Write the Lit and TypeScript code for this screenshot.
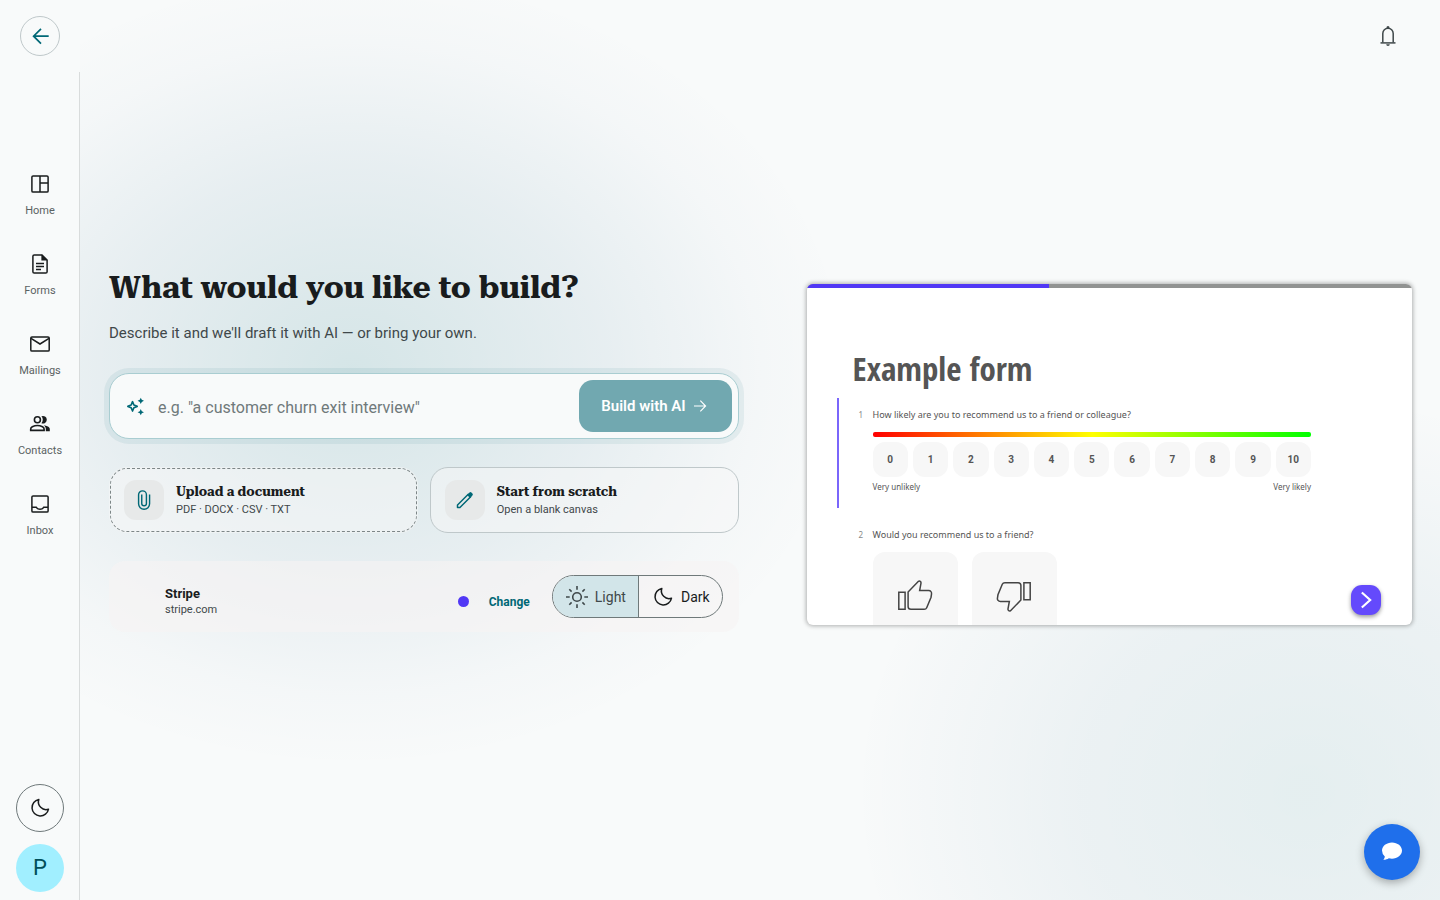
import { LitElement, html, css, svg } from "lit";
import { customElement, property, state } from "lit/decorators.js";
import { classMap } from "lit/directives/class-map.js";
import { styleMap } from "lit/directives/style-map.js";

const icons: Record<string, unknown> = {
  back: svg`<g fill="none" stroke="currentColor" stroke-width="1.7"><path d="M20.7 12.2H6M13 4.8 5.6 12.2l7.4 7.4"/></g>`,
  forward: svg`<g fill="none" stroke="currentColor" stroke-width="1.7"><path d="M3 12h17M12.5 4 20.4 12l-7.9 8"/></g>`,
  bell: svg`<g fill="none" stroke="currentColor" stroke-width="1.5"><path d="M4.5 18.9h15"/><path d="M6.8 18.5V9.4a5.2 5.2 0 0 1 10.4 0v9.1"/></g><path fill="currentColor" d="M10.4 4.3a1.6 2.2 0 0 1 3.2 0zM10.2 20.3h3.6a1.8 1.8 0 0 1-3.6 0z"/>`,
  home: svg`<g fill="none" stroke="currentColor" stroke-width="1.5"><rect x="3.9" y="3.9" width="16.2" height="16.2" rx="1.2"/><path d="M12 4v16M12 11h8"/></g>`,
  forms: svg`<g fill="none" stroke="currentColor" stroke-width="1.5"><path d="M14 2.9H6.2a1.3 1.3 0 0 0-1.3 1.3v15.6a1.3 1.3 0 0 0 1.3 1.3h11.6a1.3 1.3 0 0 0 1.3-1.3V8z"/><path d="M8 11.6h8M8 14.6h8M8 17.5h5"/></g><path fill="currentColor" d="M13.4 2.6v5.9h6z"/>`,
  mailings: svg`<g fill="none" stroke="currentColor" stroke-width="1.5"><rect x="2.8" y="4.9" width="18.4" height="14.2" rx="1.2"/><path d="m3 6.3 9 5.7 9-5.7"/></g>`,
  contacts: svg`<g fill="none" stroke="currentColor" stroke-width="1.6"><circle cx="9.4" cy="7.8" r="3"/><path d="M2.7 18.4v-1.3c0-1.1.6-1.9 1.6-2.4a11.5 11.5 0 0 1 10.2 0c1 .5 1.6 1.3 1.6 2.4v1.3z"/></g><path fill="currentColor" d="M13.4 11.2a5 5 0 0 0 0-6.9 3.8 3.8 0 1 1 0 6.9zM17.8 19.2v-2.2c0-1.5-.7-2.8-2.1-3.7 1.5.2 2.9.7 4.2 1.3 1.2.6 1.9 1.5 1.9 2.7v1.9z"/>`,
  inbox: svg`<g fill="none" stroke="currentColor" stroke-width="1.5"><rect x="3.9" y="3.9" width="16.2" height="16.2" rx="1.2"/><path d="M4 15.3h4.3c.8 1.3 2.1 2 3.7 2s2.9-.7 3.7-2H20"/></g>`,
  moon: svg`<path fill="none" stroke="currentColor" stroke-width="1.5" stroke-linejoin="round" d="M10.8 3.5A8.300 8.300 0 1 0 20.500 13.200 7.700 7.700 0 0 1 10.800 3.500z"/>`,
  sun: svg`<g fill="none" stroke="currentColor" stroke-width="1.6"><circle cx="12" cy="12" r="4.3"/><path d="M12 1v3.7M12 19.3V23M1 12h3.7M19.3 12H23M4.3 4.3l2.3 2.3M17.4 17.4l2.3 2.3M19.7 4.3l-2.3 2.3M6.6 17.4l-2.3 2.3"/></g>`,
  sparkle: svg`<path fill="none" stroke="currentColor" stroke-width="1.8" stroke-linejoin="round" d="M9.3 7.3 10.8 10.9 14.4 12.4 10.8 13.9 9.3 17.5 7.8 13.9 4.2 12.4 7.8 10.9z"/><path fill="currentColor" d="m18.3 2.9 1.1 2.4 2.4 1.1-2.4 1.1-1.1 2.4-1.1-2.4-2.4-1.1 2.4-1.1zM18.3 15.2l1.1 2.4 2.4 1.1-2.4 1.1-1.1 2.4-1.1-2.4-2.4-1.1 2.4-1.1z"/>`,
  clip: svg`<path fill="none" stroke="currentColor" stroke-width="1.7" d="M18.700 5.500v11a6.600 6.600 0 0 1-13.200 0V5.700a4.700 4.700 0 0 1 9.400 0v10.500a2.800 2.800 0 0 1-5.600 0V5.500"/>`,
  pencil: svg`<path fill="none" stroke="currentColor" stroke-width="1.8" stroke-linejoin="round" d="M3 21v-2.900L15.900 5.200l2.900 2.900L5.900 21z"/><path fill="currentColor" d="m14.500 6 2.900-2.900a1.600 1.600 0 0 1 2.300 0l1.200 1.200a1.600 1.600 0 0 1 0 2.300l-2.900 2.900z"/>`,
  chevron: svg`<path fill="none" stroke="currentColor" stroke-width="2.6" d="m7 3 10 9-10 9"/>`,
  chat: svg`<path fill="currentColor" d="M12 2.5c5.500 0 10 3.600 10 8.100s-4.500 8.100-10 8.100c-1.100 0-2.200-.1-3.200-.4-1.500 1-3.400 1.600-5.600 1.500.9-.9 1.500-2.200 1.600-3.400A7.500 7.500 0 0 1 2 10.600c0-4.500 4.500-8.100 10-8.100z"/>`,
  thumbUp: svg`<g fill="none" stroke="currentColor" stroke-width="1"><path d="M1.2 9.5h4.2v11.400H1.200zM7.400 9.300 14.300 2.200c.8-.6 1.900.2 1.700 1.200l-.9 5h6c1.300 0 2.200 1 1.900 2.400l-.3 2-2.900 7c-.3.7-.9 1.100-1.700 1.100H9.300c-1.100 0-1.900-.8-1.900-1.900z"/></g>`,
};

@customElement("ui-icon")
class UiIcon extends LitElement {
  @property() name = "home";

  static styles = css`
    :host {
      display: inline-flex;
      width: 24px;
      height: 24px;
      flex: none;
    }
    svg {
      width: 100%;
      height: 100%;
    }
  `;

  render() {
    return html`<svg viewBox="0 0 24 24" aria-hidden="true">${icons[this.name]}</svg>`;
  }
}

@customElement("form-preview")
class FormPreview extends LitElement {
  @property({ type: Number }) progress = 40;

  static styles = css`
    :host {
      display: block;
      font-family: "Noto Sans", "Open Sans", sans-serif;
      color: #555;
    }
    .card {
      position: relative;
      aspect-ratio: 16 / 9;
      overflow: hidden;
      border-radius: 6px;
      background: #fff;
      box-shadow: 0 0 4px 1px rgba(0, 0, 0, 0.3);
    }
    .track {
      height: 4px;
      background: #919392;
    }
    .bar {
      height: 4px;
      background: #5138f5;
    }
    .body {
      padding: 58px 101px 0 30px;
    }
    h2 {
      margin: 0 0 6px 16px;
      font: 700 33px/46px "Open Sans Condensed", "Open Sans", sans-serif;
      color: #555;
    }
    .question {
      display: grid;
      grid-template-columns: 14px minmax(0, 1fr);
      padding: 10px 0 10px 20px;
      border-left: 2px solid transparent;
      font-size: 9px;
      line-height: 14px;
    }
    .question.active {
      border-left-color: #7a66fb;
      height: 90px;
      margin-bottom: 10px;
    }
    .number {
      font-size: 8px;
      color: #888;
    }
    .meter {
      height: 5px;
      margin: 10px 0 5px;
      border-radius: 2px;
      background: linear-gradient(90deg, #f00, #ff0 50%, #0f0);
    }
    .scale {
      display: grid;
      grid-template-columns: repeat(11, minmax(0, 1fr));
      gap: 5px;
    }
    .score {
      height: 35px;
      padding: 0;
      border: 0;
      border-radius: 12px;
      background: #f7f7f7;
      color: #555;
      font: 700 10px/35px Roboto, sans-serif;
    }
    .ends {
      display: flex;
      justify-content: space-between;
      margin-top: 4px;
      font-size: 8px;
      line-height: 12px;
    }
    .tiles {
      display: flex;
      gap: 14px;
      margin-top: 10px;
    }
    .tile {
      display: flex;
      align-items: center;
      justify-content: center;
      width: 85px;
      height: 88px;
      padding: 0;
      border: 0;
      border-radius: 12px;
      background: #f7f7f7;
      color: #444;
    }
    .thumb {
      width: 36px;
      height: 36px;
    }
    .thumb.down {
      transform: rotate(180deg);
    }
    .next {
      position: absolute;
      right: 31px;
      bottom: 10px;
      display: flex;
      align-items: center;
      justify-content: center;
      width: 30px;
      height: 30px;
      padding: 0;
      border: 0;
      border-radius: 11px;
      background: #644afc;
      color: #fff;
      box-shadow: 0 2px 4px rgba(0, 0, 0, 0.4);
    }
    .next ui-icon {
      width: 20px;
      height: 20px;
    }
  `;

  render() {
    return html`
      <section class="card" aria-label="Example form">
        <div class="track">
          <div class="bar" style=${styleMap({ width: `${this.progress}%` })}></div>
        </div>
        <div class="body">
          <h2>Example form</h2>
          <div class="question active">
            <span class="number">1</span>
            <div>
              <div>How likely are you to recommend us to a friend or colleague?</div>
              <div class="meter"></div>
              <div class="scale">
                ${Array.from({ length: 11 }, (_, n) => html`<button class="score">${n}</button>`)}
              </div>
              <div class="ends"><span>Very unlikely</span><span>Very likely</span></div>
            </div>
          </div>
          <div class="question">
            <span class="number">2</span>
            <div>
              <div>Would you recommend us to a friend?</div>
              <div class="tiles">
                <button class="tile" aria-label="Yes"><ui-icon class="thumb" name="thumbUp"></ui-icon></button>
                <button class="tile" aria-label="No"><ui-icon class="thumb down" name="thumbUp"></ui-icon></button>
              </div>
            </div>
          </div>
        </div>
        <button class="next" aria-label="Next"><ui-icon name="chevron"></ui-icon></button>
      </section>
    `;
  }
}

@customElement("app-root")
class AppRoot extends LitElement {
  @state() private theme: "light" | "dark" = "light";

  private links = [
    { icon: "home", label: "Home" },
    { icon: "forms", label: "Forms" },
    { icon: "mailings", label: "Mailings" },
    { icon: "contacts", label: "Contacts" },
    { icon: "inbox", label: "Inbox" },
  ];

  static styles = css`
    :host {
      --slab: "Roboto Slab", "Roboto Serif", "DejaVu Serif Condensed", "DejaVu Serif", serif;
      display: grid;
      grid-template-columns: 80px minmax(0, 1fr);
      min-height: 100vh;
      background: #f8fafa;
      color: #191c1d;
      font-family: Roboto, sans-serif;
    }
    * {
      box-sizing: border-box;
    }
    button {
      font-family: inherit;
      color: inherit;
      cursor: pointer;
    }
    .side {
      display: flex;
      flex-direction: column;
    }
    .corner {
      display: flex;
      align-items: center;
      justify-content: center;
      height: 72px;
    }
    .round {
      display: flex;
      align-items: center;
      justify-content: center;
      width: 48px;
      height: 48px;
      padding: 0;
      border: 1px solid #6f797a;
      border-radius: 50%;
      background: none;
    }
    .round.back {
      width: 40px;
      height: 40px;
      border-color: #bfc8ca;
      color: #006876;
    }
    .rail {
      display: flex;
      flex: 1;
      flex-direction: column;
      align-items: center;
      padding: 84px 0 8px;
      box-shadow: inset -1px 0 #d9dcdc;
    }
    .links {
      display: grid;
      gap: 16px;
      width: 100%;
      margin: 0;
      padding: 0;
      list-style: none;
    }
    .link {
      display: flex;
      flex-direction: column;
      align-items: center;
      gap: 7px;
      height: 64px;
      padding-top: 16px;
      color: #191c1d;
      text-decoration: none;
    }
    .link-label {
      font-size: 11px;
      line-height: 16px;
      color: #5b6263;
    }
    .bottom {
      display: grid;
      gap: 12px;
      margin-top: auto;
    }
    .avatar {
      width: 48px;
      height: 48px;
      padding: 0;
      border: 0;
      border-radius: 50%;
      background: #a1efff;
      color: #004e59;
      font-size: 22px;
      line-height: 48px;
    }
    .page {
      display: flex;
      flex-direction: column;
      background:
        radial-gradient(500px 400px at 20% 41%, rgba(0, 104, 118, 0.14), rgba(0, 80, 118, 0.07) 50%, rgba(0, 60, 118, 0.015) 82%, transparent),
        radial-gradient(450px 400px at 90% 88%, rgba(0, 104, 118, 0.08), rgba(0, 80, 118, 0.05) 50%, rgba(0, 60, 118, 0.01) 88%, transparent);
    }
    .top {
      display: flex;
      align-items: center;
      justify-content: flex-end;
      height: 72px;
      padding-right: 32px;
    }
    .bell {
      display: flex;
      align-items: center;
      justify-content: center;
      width: 40px;
      height: 40px;
      padding: 0;
      border: 0;
      background: none;
      color: #3f484a;
    }
    main {
      display: grid;
      flex: 1;
      grid-template-columns: minmax(0, 1.04fr) minmax(0, 1fr);
      gap: 68px;
      align-items: center;
      padding: 0 28px 63px 29px;
    }
    .builder {
      padding-bottom: 11px;
    }
    h1 {
      margin: 0;
      font: 700 31px/44px var(--slab);
    }
    .lead {
      margin: 12px 0 29px;
      font-size: 15px;
      line-height: 22px;
      color: #3f484a;
    }
    .prompt {
      display: flex;
      align-items: center;
      gap: 12px;
      padding: 6px 6px 6px 14px;
      border: 1px solid #a9cdd1;
      border-radius: 20px;
      background: #f8fafa;
      box-shadow: 0 0 0 5px rgba(0, 104, 118, 0.07);
      color: #006876;
    }
    .prompt-icon {
      width: 22px;
      height: 22px;
    }
    .prompt-text {
      flex: 1;
      min-width: 0;
      height: 26px;
      padding: 2px 0 0;
      border: 0;
      outline: 0;
      background: none;
      color: #191c1d;
      font: 16px/24px Roboto, sans-serif;
    }
    .prompt-text::placeholder {
      color: #6f797a;
      opacity: 1;
    }
    .build {
      display: flex;
      align-items: center;
      justify-content: center;
      gap: 6px;
      height: 52px;
      padding: 0 24px 0 22px;
      border: 0;
      border-radius: 14px;
      background: #71a8b0;
      color: #fff;
      font-size: 15px;
      font-weight: 600;
      line-height: 20px;
    }
    .build ui-icon {
      width: 16px;
      height: 16px;
    }
    .choices {
      display: grid;
      grid-template-columns: 1fr 1fr;
      gap: 12px;
      margin: 28px 0;
    }
    .choice {
      display: flex;
      align-items: center;
      gap: 12px;
      padding: 12px 14px;
      border: 1px solid #bfc8ca;
      border-radius: 18px;
      background: rgba(248, 248, 248, 0.5);
      text-align: left;
    }
    .choice.dashed {
      border-color: transparent;
      outline: 1px dashed #7d8687;
      outline-offset: -2px;
    }
    .badge {
      display: flex;
      align-items: center;
      justify-content: center;
      width: 40px;
      height: 40px;
      border-radius: 12px;
      background: #e7e9e9;
      color: #006876;
    }
    .badge ui-icon {
      width: 20px;
      height: 20px;
    }
    .choice-title {
      display: block;
      font: 700 13px/20px var(--slab);
    }
    .choice-note {
      display: block;
      font-size: 11px;
      line-height: 16px;
      color: #3f484a;
    }
    .brand {
      display: flex;
      align-items: flex-end;
      padding: 14px 16px;
      border-radius: 16px;
      background: rgba(246, 244, 244, 0.6);
    }
    .logo {
      width: 28px;
      height: 28px;
      margin-right: 12px;
    }
    .brand-name {
      flex: 1;
      font-size: 13px;
      font-weight: 700;
      line-height: 16px;
    }
    .brand-site {
      display: block;
      font-size: 11px;
      font-weight: 400;
      color: #3f484a;
    }
    .swatch {
      width: 11px;
      height: 11px;
      margin: 0 20px 11px 0;
      border-radius: 50%;
      background: #5138f5;
    }
    .change {
      margin-right: 22px;
      padding: 0;
      border: 0;
      background: none;
      color: #006876;
      font-size: 12px;
      font-weight: 700;
      line-height: 32px;
    }
    .modes {
      display: flex;
      overflow: hidden;
      border: 1px solid #6f797a;
      border-radius: 22px;
    }
    .mode {
      display: flex;
      align-items: center;
      gap: 6px;
      height: 41px;
      padding: 0 12px;
      border: 0;
      background: none;
      font-size: 14px;
      line-height: 20px;
    }
    .mode + .mode {
      border-left: 1px solid #6f797a;
    }
    .mode.on {
      background: #d2e5e9;
      color: #3f484a;
    }
    .chat {
      position: fixed;
      right: 20px;
      bottom: 20px;
      display: flex;
      align-items: center;
      justify-content: center;
      width: 56px;
      height: 56px;
      padding: 0;
      border: 0;
      border-radius: 50%;
      background: #1f6feb;
      color: #fff;
      box-shadow: 0 3px 8px rgba(0, 0, 0, 0.3);
    }
  `;

  private renderMode(mode: "light" | "dark", icon: string, label: string) {
    const on = this.theme === mode;
    return html`
      <button class=${classMap({ mode: true, on })} aria-pressed=${on ? "true" : "false"} @click=${() => (this.theme = mode)}>
        <ui-icon name=${icon}></ui-icon>${label}
      </button>
    `;
  }

  render() {
    return html`
      <aside class="side">
        <div class="corner">
          <button class="round back" aria-label="Back"><ui-icon name="back"></ui-icon></button>
        </div>
        <nav class="rail">
          <ul class="links">
            ${this.links.map(
              (l) => html`<li>
                <a class="link" href="#${l.label.toLowerCase()}">
                  <ui-icon name=${l.icon}></ui-icon><span class="link-label">${l.label}</span>
                </a>
              </li>`
            )}
          </ul>
          <div class="bottom">
            <button class="round" aria-label="Dark mode"><ui-icon name="moon"></ui-icon></button>
            <button class="avatar">P</button>
          </div>
        </nav>
      </aside>
      <div class="page">
        <header class="top">
          <button class="bell" aria-label="Notifications"><ui-icon name="bell"></ui-icon></button>
        </header>
        <main>
          <div class="builder">
            <h1>What would you like to build?</h1>
            <p class="lead">Describe it and we'll draft it with AI — or bring your own.</p>
            <div class="prompt">
              <ui-icon class="prompt-icon" name="sparkle"></ui-icon>
              <input class="prompt-text" type="text" aria-label="Describe your form" placeholder='e.g. "a customer churn exit interview"' />
              <button class="build">Build with AI <ui-icon name="forward"></ui-icon></button>
            </div>
            <div class="choices">
              <button class="choice dashed">
                <span class="badge"><ui-icon name="clip"></ui-icon></span>
                <span><span class="choice-title">Upload a document</span><span class="choice-note">PDF · DOCX · CSV · TXT</span></span>
              </button>
              <button class="choice">
                <span class="badge"><ui-icon name="pencil"></ui-icon></span>
                <span><span class="choice-title">Start from scratch</span><span class="choice-note">Open a blank canvas</span></span>
              </button>
            </div>
            <div class="brand">
              <span class="logo"></span>
              <div class="brand-name">Stripe<span class="brand-site">stripe.com</span></div>
              <span class="swatch"></span>
              <button class="change">Change</button>
              <div class="modes" role="group" aria-label="Form theme">
                ${this.renderMode("light", "sun", "Light")}${this.renderMode("dark", "moon", "Dark")}
              </div>
            </div>
          </div>
          <form-preview></form-preview>
        </main>
      </div>
      <button class="chat" aria-label="Open chat"><ui-icon name="chat"></ui-icon></button>
    `;
  }
}
